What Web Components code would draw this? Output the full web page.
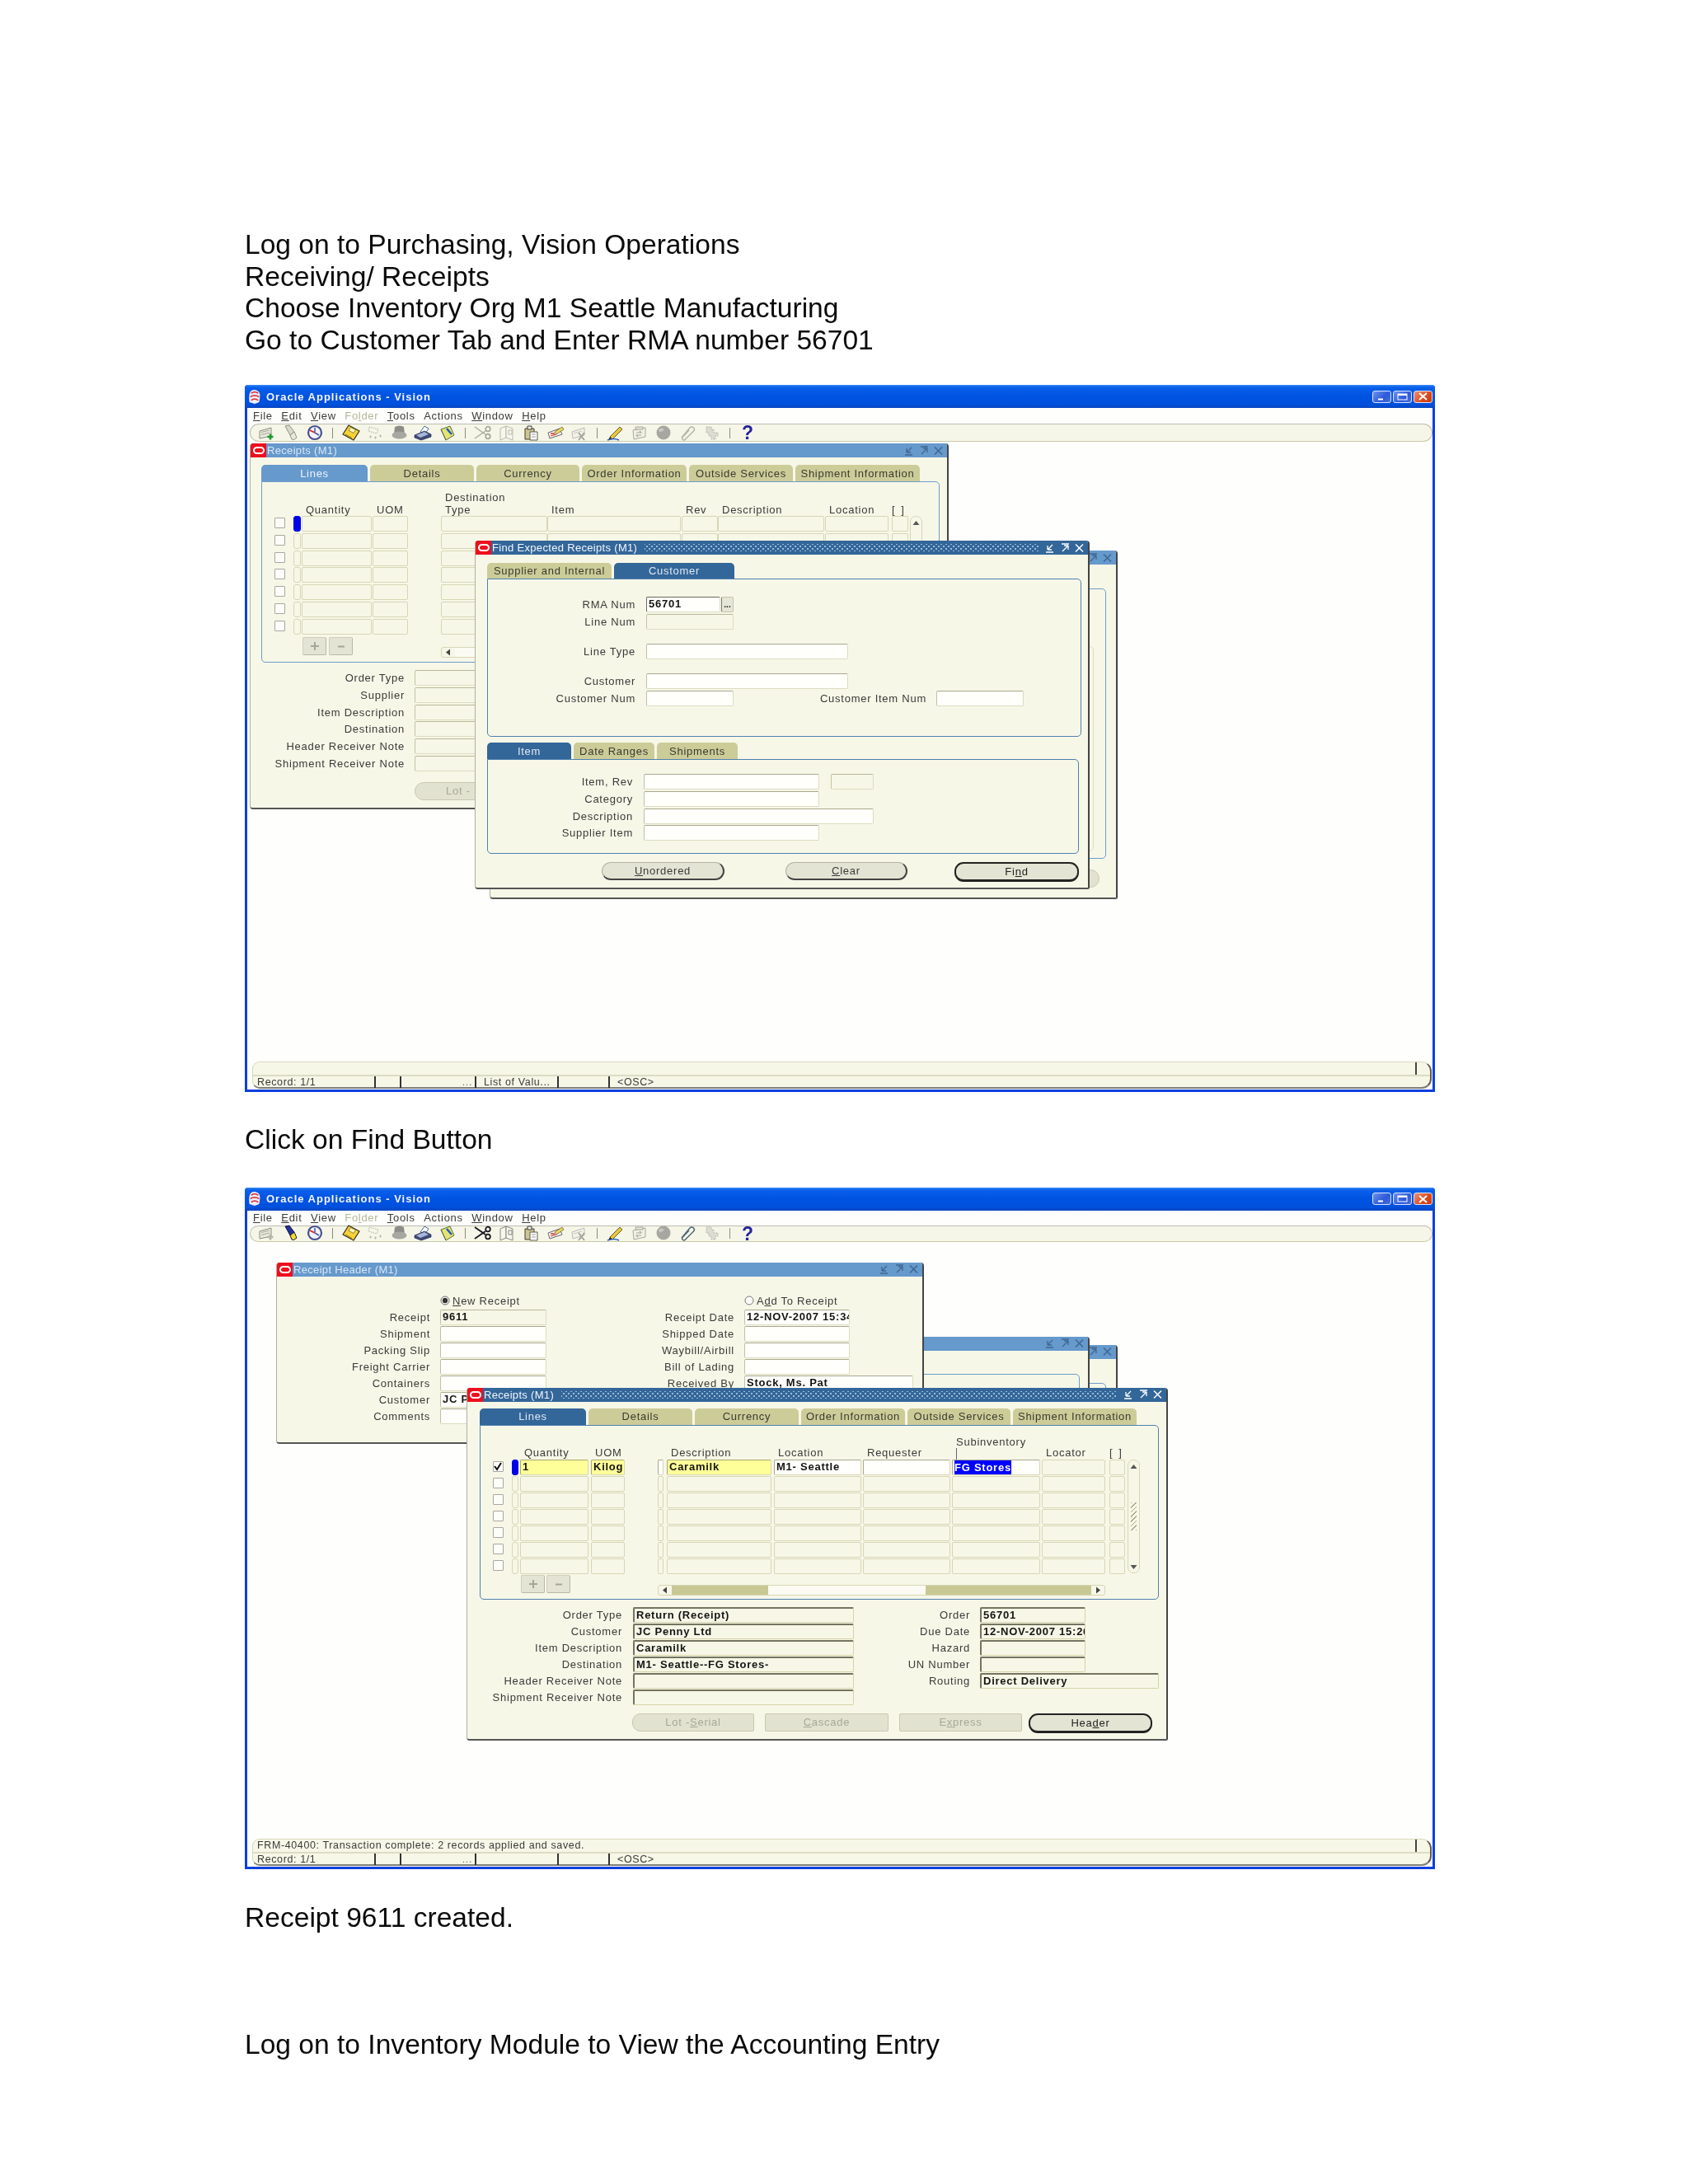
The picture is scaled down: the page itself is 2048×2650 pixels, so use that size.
<!DOCTYPE html>
<html><head><meta charset="utf-8"><title>Receipts</title>
<style>
html,body{margin:0;background:#fff}
main{display:block;box-sizing:border-box;padding:278px 0 0 297px;height:2650px;overflow:hidden}
</style></head><body>
<main>
<doc-text>Log on to Purchasing, Vision Operations</doc-text>
<doc-text>Receiving/ Receipts</doc-text>
<doc-text>Choose Inventory Org M1 Seattle Manufacturing</doc-text>
<doc-text>Go to Customer Tab and Enter RMA number 56701</doc-text>

<ora-app style="margin-top:35px;height:858px;--mh:19px;--th:22px" set="1" lov="List of Valu...">
  <ora-win title="Receipts (M1)" style="left:3px;top:2px;width:848px;height:444px">
    <ora-tabs tabs="Lines|Details|Currency|Order Information|Outside Services|Shipment Information" widths="132 129 128 130 129 154" style="margin:9px 0 0 13px;width:823px" ph="220">
      <ora-table cols='[[23,0,"chk"],[10,9,"ind"],[86,85,"f","Quantity"],[83,43,"f","UOM"],[129,129,"f","Destination|Type"],[163,162,"f","Item"],[44,44,"f","Rev"],[130,129,"f","Description"],[81,77,"f","Location"],[22,20,"f","[ ]"],[15,15,"vs"]]' pitch="20.7" first='{}' hs='{"w":546,"gap":107,"btngap":3,"mt":2,"parts":[]}'></ora-table>
    </ora-tabs>
    <ora-form cols="187px 12px 269px" rows="repeat(6,20.7px)" style="margin-top:9px">
      <ora-label r="1" c="1/2">Order Type</ora-label><ora-field r="1" c="3/4"></ora-field>
      <ora-label r="2" c="1/2">Supplier</ora-label><ora-field r="2" c="3/4"></ora-field>
      <ora-label r="3" c="1/2">Item Description</ora-label><ora-field r="3" c="3/4"></ora-field>
      <ora-label r="4" c="1/2">Destination</ora-label><ora-field r="4" c="3/4"></ora-field>
      <ora-label r="5" c="1/2">Header Receiver Note</ora-label><ora-field r="5" c="3/4"></ora-field>
      <ora-label r="6" c="1/2">Shipment Receiver Note</ora-label><ora-field r="6" c="3/4"></ora-field>
    </ora-form>
    <ora-row style="margin:11px 0 0 199px"><ora-btn w="148" kind="dis">Lot - Serial</ora-btn></ora-row>
  </ora-win>

  <ora-win title="Receipts (M1)" style="left:294px;top:132px;width:762px;height:423px">
    <ora-panel style="margin:29px 0 0 16px;width:731px;height:328px;display:flex">
      <ora-panel soft style="margin:69px 14px 0 auto;width:680px;height:249px"></ora-panel>
    </ora-panel>
    <ora-row style="margin:13px 20px 0 auto"><ora-btn w="148" kind="dis"></ora-btn></ora-row>
  </ora-win>

  <ora-win title="Find Expected Receipts (M1)" active style="left:276px;top:120px;width:746px;height:423px">
    <ora-tabs dark tabs="Supplier and Internal|Customer" active="1" widths="154 149" th="19" ph="192" style="margin:10px 0 0 14px;width:721px">
      <ora-form cols="179px 13px 90px 16px 139px 95px 12px 106px" rows="21px 36px 36px 21px 21px" style="padding-top:21px">
        <ora-label r="1" c="1/2">RMA Num</ora-label><ora-field r="1" c="3/4" k="k">56701</ora-field><ora-lov r="1" c="4/5"></ora-lov>
        <ora-label r="2" c="1/2">Line Num</ora-label><ora-field r="2" c="3/5" k="b"></ora-field>
        <ora-label r="3" c="1/2">Line Type</ora-label><ora-field r="3" c="3/6" k="w"></ora-field>
        <ora-label r="4" c="1/2">Customer</ora-label><ora-field r="4" c="3/6" k="w"></ora-field>
        <ora-label r="5" c="1/2">Customer Num</ora-label><ora-field r="5" c="3/5" k="w"></ora-field>
        <ora-label r="5" c="5/7">Customer Item Num</ora-label><ora-field r="5" c="8/9" k="w"></ora-field>
      </ora-form>
    </ora-tabs>
    <ora-tabs dark tabs="Item|Date Ranges|Shipments" widths="105 101 101" ph="115" style="margin:7px 0 0 14px;width:718px">
      <ora-form cols="176px 13px 213px 14px 52px" rows="21px 21px 20px 20px" style="padding-top:17px">
        <ora-label r="1" c="1/2">Item, Rev</ora-label><ora-field r="1" c="3/4" k="w"></ora-field><ora-field r="1" c="5/6" k="b"></ora-field>
        <ora-label r="2" c="1/2">Category</ora-label><ora-field r="2" c="3/4" k="w"></ora-field>
        <ora-label r="3" c="1/2">Description</ora-label><ora-field r="3" c="3/6" k="w"></ora-field>
        <ora-label r="4" c="1/2">Supplier Item</ora-label><ora-field r="4" c="3/4" k="w"></ora-field>
      </ora-form>
    </ora-tabs>
    <ora-row style="margin:10px 0 0 153px;gap:74px">
      <ora-btn w="149"><u>U</u>nordered</ora-btn><ora-btn w="148"><u>C</u>lear</ora-btn><ora-btn w="151" kind="def" style="margin-left:-17px">Fi<u>n</u>d</ora-btn>
    </ora-row>
  </ora-win>
</ora-app>

<doc-text style="margin-top:39px">Click on Find Button</doc-text>

<ora-app style="margin-top:38px;height:827px;--mh:18px;--th:20px" set="2" message="FRM-40400: Transaction complete: 2 records applied and saved.">
  <ora-win title="Receipts (M1)" style="left:294px;top:125px;width:762px;height:423px">
    <ora-panel style="margin:29px 0 0 16px;width:731px;height:328px"></ora-panel>
  </ora-win>
  <ora-win title="Find Expected Receipts (M1)" style="left:277px;top:115px;width:745px;height:423px">
    <ora-panel style="margin:28px 0 0 14px;width:718px;height:190px"></ora-panel>
  </ora-win>

  <ora-win title="Receipt Header (M1)" style="left:35px;top:25px;width:786px;height:220px">
    <ora-form cols="186px 12px 129px 228px 12px 128px 77px" rows="repeat(8,20px)" style="margin-top:20px">
      <ora-radio r="1" c="3/5" on><u>N</u>ew Receipt</ora-radio><ora-radio r="1" c="6/8">A<u>d</u>d To Receipt</ora-radio>
      <ora-label r="2" c="1/2">Receipt</ora-label><ora-field r="2" c="3/4" k="b">9611</ora-field>
      <ora-label r="2" c="4/5">Receipt Date</ora-label><ora-field r="2" c="6/7" k="w">12-NOV-2007 15:34</ora-field>
      <ora-label r="3" c="1/2">Shipment</ora-label><ora-field r="3" c="3/4" k="w"></ora-field>
      <ora-label r="3" c="4/5">Shipped Date</ora-label><ora-field r="3" c="6/7" k="w"></ora-field>
      <ora-label r="4" c="1/2">Packing Slip</ora-label><ora-field r="4" c="3/4" k="w"></ora-field>
      <ora-label r="4" c="4/5">Waybill/Airbill</ora-label><ora-field r="4" c="6/7" k="w"></ora-field>
      <ora-label r="5" c="1/2">Freight Carrier</ora-label><ora-field r="5" c="3/4" k="w"></ora-field>
      <ora-label r="5" c="4/5">Bill of Lading</ora-label><ora-field r="5" c="6/7" k="w"></ora-field>
      <ora-label r="6" c="1/2">Containers</ora-label><ora-field r="6" c="3/4" k="w"></ora-field>
      <ora-label r="6" c="4/5">Received By</ora-label><ora-field r="6" c="6/8" k="w">Stock, Ms. Pat</ora-field>
      <ora-label r="7" c="1/2">Customer</ora-label><ora-field r="7" c="3/4" k="w">JC Penny Ltd</ora-field>
      <ora-label r="8" c="1/2">Comments</ora-label><ora-field r="8" c="3/4" k="w"></ora-field>
    </ora-form>
  </ora-win>

  <ora-win title="Receipts (M1)" active style="left:266px;top:177px;width:851px;height:428px">
    <ora-tabs dark tabs="Lines|Details|Currency|Order Information|Outside Services|Shipment Information" widths="132 129 129 129 128 153" style="margin:8px 0 0 15px;width:824px" ph="212">
      <ora-table cols='[[23,0,"chk"],[10,8,"ind"],[86,83,"f","Quantity"],[81,41,"f","UOM"],[11,7,"f"],[130,127,"f","Description"],[108,106,"f","Location"],[108,106,"f","Requester"],[109,107,"f","@Subinventory"],[82,77,"f","Locator"],[22,19,"f","[ ]"],[15,15,"vs"]]' pitch="20" check first='{"2":["1","y"],"3":["Kilog","y"],"4":["","w"],"5":["Caramilk","y"],"6":["M1- Seattle","w"],"7":["","w"],"8":["!FG Stores","w"]}' hs='{"w":543,"gap":106,"btngap":2,"mt":0,"parts":[117,191,201]}'></ora-table>
    </ora-tabs>
    <ora-form cols="173px 13px 268px 141px 12px 128px 89px" rows="repeat(6,20px)" style="margin:9px 0 0 15px">
      <ora-label r="1" c="1/2">Order Type</ora-label><ora-field r="1" c="3/4" k="r">Return (Receipt)</ora-field>
      <ora-label r="2" c="1/2">Customer</ora-label><ora-field r="2" c="3/4" k="r">JC Penny Ltd</ora-field>
      <ora-label r="3" c="1/2">Item Description</ora-label><ora-field r="3" c="3/4" k="r">Caramilk</ora-field>
      <ora-label r="4" c="1/2">Destination</ora-label><ora-field r="4" c="3/4" k="r">M1- Seattle--FG Stores-</ora-field>
      <ora-label r="5" c="1/2">Header Receiver Note</ora-label><ora-field r="5" c="3/4" k="r"></ora-field>
      <ora-label r="6" c="1/2">Shipment Receiver Note</ora-label><ora-field r="6" c="3/4" k="r"></ora-field>
      <ora-label r="1" c="4/5">Order</ora-label><ora-field r="1" c="6/7" k="r">56701</ora-field>
      <ora-label r="2" c="4/5">Due Date</ora-label><ora-field r="2" c="6/7" k="r">12-NOV-2007 15:26</ora-field>
      <ora-label r="3" c="4/5">Hazard</ora-label><ora-field r="3" c="6/7" k="r"></ora-field>
      <ora-label r="4" c="4/5">UN Number</ora-label><ora-field r="4" c="6/7" k="r"></ora-field>
      <ora-label r="5" c="4/5">Routing</ora-label><ora-field r="5" c="6/8" k="r">Direct Delivery</ora-field>
    </ora-form>
    <ora-row style="margin:9px 0 0 200px;gap:13px">
      <ora-btn w="148" kind="dis" radius="10px 2px 2px 10px">Lot - <u>S</u>erial</ora-btn><ora-btn w="150" kind="dis" radius="2px"><u>C</u>ascade</ora-btn><ora-btn w="149" kind="dis" radius="2px">E<u>x</u>press</ora-btn><ora-btn w="150" kind="def" style="margin-left:-5px">Hea<u>d</u>er</ora-btn>
    </ora-row>
  </ora-win>
</ora-app>

<doc-text style="margin-top:40px">Receipt 9611 created.</doc-text>
<doc-text style="margin-top:115px">Log on to Inventory Module to View the Accounting Entry</doc-text>
</main>

<script>
const sh=(el,html)=>{el.attachShadow({mode:'open'}).innerHTML=html;return el.shadowRoot};
const place=el=>{const r=el.getAttribute('r'),c=el.getAttribute('c');if(r)el.style.gridRow=r;if(c)el.style.gridColumn=c};

customElements.define('doc-text',class extends HTMLElement{constructor(){super();sh(this,`<style>:host{display:block;font:33.6px/38.6px "Liberation Sans",Arial,sans-serif;color:#0a0a0a;white-space:nowrap;filter:blur(.35px)}</style><slot></slot>`)}});

/* ---------- toolbar icons ---------- */
const ICON={
 new:v=>`<path d="M2 8 16 4v10L2 17z" fill="#e9e9dc" stroke="#8a8a80"/><path d="M4 9.500 14 7M4 12.500 14 10" stroke="#a5a598"/><path d="M15 11.500v7M11.500 15h7" stroke="${v==1?'#1c9a2e':'#b5b5a8'}" stroke-width="2.600"/>`,
 flash:v=>{const a=v==1?['#d8d8cc','#e9e9dc','#8f8f86']:['#23349a','#f5d82e','#16163a'];return `<path d="M4 2 9 1l6 8-5 4z" fill="${a[0]}" stroke="${a[2]}"/><path d="M10 13l5-4 3 7q-4 4-6 2z" fill="${a[1]}" stroke="${a[2]}"/>`},
 clock:()=>`<circle cx="11" cy="10" r="8" fill="#f2f2fa" stroke="#46508e" stroke-width="2.200"/><path d="M5 7l6 3" stroke="#d22" stroke-width="1.800"/><path d="M11 10l5 3M11 4v5" stroke="#3a5ab0" stroke-width="1.500"/>`,
 save:()=>`<path d="M8 1 21 8 14 19 1 12z" fill="#f4d238" stroke="#3a3420" stroke-width="1.300"/><path d="M10.500 3.500l6 3.200-2.500 3.800-6-3.200z" fill="#fff7b8" stroke="#6b5c20" stroke-width=".7"/><path d="M4 12l8 4.500" stroke="#8c7414"/>`,
 nav:()=>`<path d="M4 3l11 3-2 5-10-3z" fill="none" stroke="#b5b5a8" stroke-dasharray="1.500 1"/><path d="M4 15h3M5.500 13.500v3M10 16h3M11.500 14.500v3M16 14h3M17.500 12.500v3" stroke="#b5b5a8"/>`,
 hat:()=>`<path d="M5 12 6 3q6-3 11 0l1 9z" fill="#8d8d88"/><ellipse cx="11.500" cy="13" rx="9" ry="4.500" fill="#a8a8a2"/>`,
 print:()=>`<path d="M8 9l5-7 5 3-4 6z" fill="#fff" stroke="#4a6aa0"/><path d="M1 13l12-5 8 4v3L9 19l-8-3z" fill="#3f4a78" stroke="#222a50" stroke-width=".7"/><path d="M3 13l10-4 5 3-10 4z" fill="#a8b6d8"/>`,
 folder:()=>`<path d="M3 6l11-4 5 11-10 6z" fill="#e4e278" stroke="#55703a"/><path d="M3 6l6 13" stroke="#55703a"/><path d="M10 5l6 7" stroke="#1c5ab8" stroke-width="2.400"/>`,
 cut:v=>{const c=v==1?'#a9a9a0':'#15151f';return `<path d="M1 3l13 9M1 17l13-9" stroke="${c}" stroke-width="${v==1?1.400:1.800}" fill="none"/><circle cx="17" cy="5.500" r="2.800" fill="none" stroke="${c}" stroke-width="1.800"/><circle cx="17" cy="14.500" r="2.800" fill="none" stroke="${c}" stroke-width="1.800"/>`},
 copy:v=>{const c=v==1?'#b8b8ac':'#888880';return `<path d="M3 5l7-3v14l-7 3z" fill="#f7f7ee" stroke="${c}"/><path d="M10 2l8 3v14l-8-3z" fill="#f7f7ee" stroke="${c}"/><path d="M13 7h4v5h-4z" fill="none" stroke="${c}"/>`},
 paste:()=>`<path d="M3 5h11v13H3z" fill="#cfc493" stroke="#3e3e30"/><path d="M6 2h5v4H6z" fill="#eee" stroke="#3e3e30"/><path d="M9 9h9v10H9z" fill="#fff" stroke="#5a5a4a"/><path d="M11 12h5M11 15h5" stroke="#999"/>`,
 edit:()=>`<path d="M2 10l14-5 3 7-15 5z" fill="#f7f7f2" stroke="#666"/><path d="M5 11h5M5 14l7-2" stroke="#c33" stroke-width="1.300"/><path d="M10 9l9-6 2 3-9 6z" fill="#f0d850" stroke="#555" stroke-width=".7"/>`,
 del:()=>`<path d="M2 9l15-5v9L3 17z" fill="#f2f2e8" stroke="#bbb"/><path d="M4 11l10-3" stroke="#c8c8bc"/><path d="M10 10l7 9M17 10l-7 9" stroke="#a5a59c" stroke-width="2"/>`,
 pencil:()=>`<path d="M4 15 16 3l3 3L7 18z" fill="#e8c838" stroke="#3c3c2c" stroke-width=".8"/><path d="M4 15l3 3-5 1z" fill="#222"/><path d="M1 19q8-3 14 0" fill="none" stroke="#2a5ab8" stroke-width="1.600"/>`,
 form:()=>`<path d="M3 7l15-3v11L4 18z" fill="#f0f0e6" stroke="#a8a89c"/><path d="M6 3h9v3H6z" fill="#e4e4da" stroke="#a8a89c"/><path d="M7 10h6l-2-2M13 13H7l2 2" fill="none" stroke="#a8a89c" stroke-width="1.200"/>`,
 globe:()=>`<circle cx="11" cy="10" r="8.500" fill="#a7a7a2"/><path d="M5 6q4-3 7 0-3 4-6 3z" fill="#c8c8c2"/>`,
 clip:v=>{const c=v==1?'#b4b4a8':'#4f6a78';return `<path d="M5 16 15 4a3 3 0 0 1 4.500 4L9.500 18a2 2 0 0 1-3.500-2.500L14 7" fill="none" stroke="${c}" stroke-width="1.500" transform="translate(-1)"/>`},
 puzzle:()=>`<path d="M4 3h6v3h3v4h5v4h-3v4h-5v-4H7v-4H4z" fill="#dcdcd2" stroke="#b8b8ac" stroke-dasharray="2 1"/>`
};
const ORDER=['new','flash','clock','|','save','nav','hat','print','folder','|','cut','copy','paste','edit','del','|','pencil','form','globe','clip','puzzle','|','?'];

customElements.define('ora-app',class extends HTMLElement{constructor(){super();
 const v=this.getAttribute('set')||'1';
 const tools=ORDER.map(n=>n=='|'?'<i class="sep"></i>':n=='?'?'<span class="ic help">?</span>':`<span class="ic"><svg width="22" height="20" viewBox="0 0 22 20" stroke-linejoin="round">${ICON[n](v)}</svg></span>`).join('');
 const msg=this.getAttribute('message')||'';
 const lov=this.getAttribute('lov')||'';
 const cell=(w,t,cls='')=>`<span class="c ${cls}" style="width:${w}px">${t}</span>`;
 sh(this,`<style>
 :host{display:flex;flex-direction:column;box-sizing:border-box;width:1444px;padding:0 3px 3px;background:#0b3fdf;border-radius:4px 4px 0 0;
  font:13px/19px "Liberation Sans",Arial,sans-serif;letter-spacing:.75px;color:#3a3a3a;filter:blur(.35px)}
 .title{flex:none;margin:0 -3px;height:28px;display:flex;align-items:center;padding:0 3px 0 4px;border-radius:4px 4px 0 0;
  background:linear-gradient(#3a8cf4 0,#0a60ea 10%,#0054e2 45%,#0050dc 85%,#0a46c0 100%);color:#f4f4ff;font-weight:700;font-size:13px;letter-spacing:1px}
 .title svg{flex:none}
 .title svg.app{margin-right:6px}
 .title b{flex:1}
 .xp{width:23px;height:15px;margin-left:2px;border-radius:3px;border:1px solid #d8e4fa;box-sizing:border-box;background:linear-gradient(135deg,#6f92ee,#2c58d8 60%,#4a70e0);display:flex;align-items:center;justify-content:center}
 .xp.x{background:linear-gradient(135deg,#f09070,#dc4a1c 60%,#c83a10);margin-right:0}
 .in{flex:1;min-height:0;display:flex;flex-direction:column;background:#fefefc}
 .menu{flex:none;height:var(--mh);display:flex;gap:10.500px;align-items:center;padding-left:7px;letter-spacing:.7px}
 .menu .off{color:#b5b59a}
 .tb{flex:none;box-sizing:border-box;height:var(--th);margin-left:3px;padding-left:5px;display:flex;align-items:center;background:#f6f6e8;border:1px solid #bdbdb0;border-bottom-color:#c9c9a8;border-radius:11px}
 .ic{flex:none;width:29.3px;display:flex;justify-content:center;align-items:center;height:18px}
 .ic svg{display:block;margin-top:-1px}
 .help{font:700 23px/18px "Liberation Sans",sans-serif;letter-spacing:0;color:#24249c}
 .sep{flex:none;width:1px;height:13px;background:#8a8a80;margin:0 6.500px}
 .desk{flex:1;position:relative;min-height:0}
 .st{flex:none;box-sizing:border-box;height:33px;margin:0 1px 1px 6px;background:#f7f7e8;border:1px solid #d8d8bc;border-bottom:2px solid #7f7f78;border-right:2px solid #5a5a55;border-radius:9px 12px 12px 9px;display:flex;flex-direction:column}
 .l1{height:15px;display:flex;align-items:center;justify-content:space-between;padding:0 16px 0 5px;border-bottom:2px solid #dcdcc4;font-size:12.5px;line-height:15px;letter-spacing:.62px;white-space:nowrap}
 .l1 i{width:2px;height:15px;background:#444}
 .l2{flex:1;display:flex;align-items:center;font-size:12.5px;line-height:14px;letter-spacing:.62px;white-space:nowrap;padding-left:5px}
 .c{box-sizing:border-box;display:block;padding-left:9px;height:14px;border-left:2px solid #333;overflow:hidden}
 .c.f{border-left:0;padding-left:0}
 .c.r{text-align:right;padding-right:3px;color:#777}
 </style>
 <div class="title"><svg class="app" width="16" height="17" viewBox="0 0 14 16"><path d="M7 0q6 1 6 6t-1 8l-5 2-6-2Q0 10 1 5t6-5z" fill="#eef"/><path d="M3 4q4-3 8 0M2 8q5-3 10 0M3 12q4-3 8 0" fill="none" stroke="#d8383c" stroke-width="1.600"/></svg><b>Oracle Applications - Vision</b>
 <span class="xp"><svg width="11" height="9"><path d="M1 7.500h6" stroke="#fff" stroke-width="2"/></svg></span>
 <span class="xp"><svg width="13" height="9"><rect x="1" y="1" width="11" height="7" fill="none" stroke="#fff"/><path d="M1 2h11" stroke="#fff" stroke-width="2"/></svg></span>
 <span class="xp x"><svg width="13" height="10"><path d="M2 1l9 8M11 1l-9 8" stroke="#fff" stroke-width="2"/></svg></span></div>
 <div class="in">
  <div class="menu"><span><u>F</u>ile</span><span><u>E</u>dit</span><span><u>V</u>iew</span><span class="off">Fo<u>l</u>der</span><span><u>T</u>ools</span><span>Actions</span><span><u>W</u>indow</span><span><u>H</u>elp</span></div>
  <div class="tb">${tools}</div>
  <div class="desk"><slot></slot></div>
  <div class="st"><div class="l1"><span>${msg}</span><i></i></div>
   <div class="l2">${cell(142,'Record: 1/1','f')}${cell(31,'')}${cell(91,'...','r')}${cell(100,lov)}${cell(62,'')}${cell(200,'&lt;OSC&gt;')}</div></div>
 </div>`)}});

customElements.define('ora-win',class extends HTMLElement{constructor(){super();
 const a=this.hasAttribute('active'),t=this.getAttribute('title');
 this.removeAttribute('title');this.dataset.title=t;
 const c=a?'#ffffff':'#3f6690';
 sh(this,`<style>
 :host{position:absolute;display:flex;flex-direction:column;box-sizing:border-box;background:#f7f7e8;border-left:1px solid #b0b0a0;border-right:2px solid #444;border-bottom:2px solid #555;border-radius:4px 4px 2px 4px;overflow:hidden}
 .t{flex:none;height:17px;display:flex;align-items:center;gap:0;background:${a?'#336699':'#6699cc'};color:${a?'#f2f6fa':'#d9e6f4'};white-space:nowrap;letter-spacing:.32px}
 .lg{flex:none;width:19px;height:17px;background:#ee0f1e;display:flex;align-items:center;justify-content:center}
 .lg i{box-sizing:border-box;width:14px;height:9px;border:2px solid #fff;border-radius:5px}
 .n{padding-left:1px;margin-right:9px}
 .d{flex:1;height:9px;${a?`background:radial-gradient(circle,#9cbcd8 .8px,transparent 1.1px) 0 0/6px 6px,radial-gradient(circle,#9cbcd8 .8px,transparent 1.1px) 3px 3px/6px 6px`:''}}
 .w{display:flex;gap:6px;padding:0 5px 0 8px;flex:none}
 .b{flex:1;min-height:0;display:flex;flex-direction:column}
 </style>
 <div class="t"><span class="lg"><i></i></span><span class="n">${t}</span><span class="d"></span>
 <span class="w"><svg width="12" height="12"><path d="M1 11h9M3 8l6-6M3 8h5M3 8V3" stroke="${c}" fill="none" stroke-width="1.300"/></svg><svg width="12" height="12"><path d="M2 1h9M3 10l7-7M10 3H5M10 3v5" stroke="${c}" fill="none" stroke-width="1.300"/></svg><svg width="11" height="12"><path d="M1 1.500l9 9M10 1.500l-9 9" stroke="${c}" fill="none" stroke-width="1.500"/></svg></span></div>
 <div class="b"><slot></slot></div>`)}});

customElements.define('ora-tabs',class extends HTMLElement{constructor(){super();
 const names=this.getAttribute('tabs').split('|'),ws=this.getAttribute('widths').split(' '),act=+(this.getAttribute('active')||0),dark=this.hasAttribute('dark');
 const th=this.getAttribute('th')||20,ph=this.getAttribute('ph');
 const col=dark?'#336699':'#6699cc';
 sh(this,`<style>
 :host{display:block;flex:none;box-sizing:border-box}
 .s{display:flex;height:${th}px;align-items:stretch}
 .x{box-sizing:border-box;margin-right:3px;border-radius:5px 5px 0 0;background:#cccc99;display:flex;align-items:center;justify-content:center;white-space:nowrap;color:#3a3a30;letter-spacing:.72px}
 .x.a{background:${col};color:${dark?'#dfe9f3':'#eef4fa'}}
 .p{box-sizing:border-box;height:${ph}px;background:#f7f7e8;border:1px solid ${dark?'#4e80ae':'#6c9ccb'};border-radius:0 5px 5px 5px}
 </style><div class="s">${names.map((n,i)=>`<span class="x ${i==act?'a':''}" style="width:${ws[i]-3}px">${n}</span>`).join('')}</div><div class="p"><slot></slot></div>`)}});

customElements.define('ora-panel',class extends HTMLElement{constructor(){super();
 const soft=this.hasAttribute('soft');
 sh(this,`<style>:host{display:block;box-sizing:border-box;flex:none;border:1px solid ${soft?'#dcdcc0':'#6c9ccb'};border-radius:5px;background:#f7f7e8}</style><slot></slot>`)}});

customElements.define('ora-form',class extends HTMLElement{constructor(){super();
 sh(this,`<style>:host{display:grid;flex:none;box-sizing:border-box;justify-content:start;grid-template-columns:${this.getAttribute('cols')};grid-template-rows:${this.getAttribute('rows')}}</style><slot></slot>`)}});

customElements.define('ora-row',class extends HTMLElement{constructor(){super();
 sh(this,`<style>:host{display:flex;flex:none}</style><slot></slot>`)}});

customElements.define('ora-label',class extends HTMLElement{constructor(){super();
 sh(this,`<style>:host{display:block;text-align:right;white-space:nowrap;height:19px;line-height:20px;color:#3a3a3a}</style><slot></slot>`)}
 connectedCallback(){place(this)}});

const FK={
 b:'background:#f7f7e8;border:1px solid #dcdcc0;border-top-color:#b8b898;border-left-color:#c4c4a4',
 w:'background:#fffffb;border:1px solid #dcdcc0;border-top-color:#a8a890;border-left-color:#c0c0a8',
 k:'background:#fffffb;border:1px solid #dcdcc0;border-top-color:#6a6a60;border-left-color:#6a6a60',
 r:'background:#f7f7e8;border:1px solid #d4d4a8;border-top:2px solid #74745f;border-left:2px solid #74745f;line-height:15px',
 y:'background:#ffff99;border:1px solid #d4d4a8'};
customElements.define('ora-field',class extends HTMLElement{constructor(){super();
 const k=this.getAttribute('k')||'b';
 sh(this,`<style>:host{display:block;box-sizing:border-box;height:19px;${FK[k]};border-radius:2px;overflow:hidden;white-space:nowrap;padding-left:2px;font-weight:700;line-height:16px;color:#141414}</style><slot></slot>`)}
 connectedCallback(){place(this)}});

customElements.define('ora-lov',class extends HTMLElement{constructor(){super();
 sh(this,`<style>:host{display:flex;align-items:center;justify-content:center;box-sizing:border-box;height:19px;margin-left:1px;background:#e6e6d6;border:1px solid #c4c4a8;border-left-color:#7a7a6c;border-radius:2px;font-weight:700;font-size:10px;line-height:10px;letter-spacing:0;color:#222}</style>...`)}
 connectedCallback(){place(this)}});

customElements.define('ora-radio',class extends HTMLElement{constructor(){super();
 const on=this.hasAttribute('on');
 sh(this,`<style>:host{display:flex;align-items:center;gap:3px;height:19px;white-space:nowrap}svg{flex:none}</style><svg width="12" height="12"><circle cx="6" cy="6" r="5" fill="#fffffb" stroke="${on?'#666':'#777'}"/>${on?'<circle cx="6" cy="6" r="3.200" fill="#333"/>':''}</svg><span><slot></slot></span>`)}
 connectedCallback(){place(this)}});

customElements.define('ora-btn',class extends HTMLElement{constructor(){super();
 const k=this.getAttribute('kind')||'n',w=this.getAttribute('w'),rad=this.getAttribute('radius')||'11px';
 const skin={n:'background:#e4e4d4;color:#3a3a3a;border:1px solid #b4b4a0;border-right:2px solid #444;border-bottom:2px solid #444',
  dis:'background:#e2e2d0;color:#a8a898;border:1px solid #c8c8b0',
  def:'background:#e4e4d4;color:#222;border:2px solid #222;border-bottom-width:3px'}[k];
 sh(this,`<style>:host{display:flex;flex:none;align-items:center;justify-content:center;box-sizing:border-box;width:${w}px;height:${k=='def'?24:22}px;border-radius:${rad};white-space:nowrap;${skin}}</style><slot></slot>`)}});

customElements.define('ora-table',class extends HTMLElement{constructor(){super();
 const cols=JSON.parse(this.getAttribute('cols')),p=+this.getAttribute('pitch'),first=JSON.parse(this.getAttribute('first')||'{}'),hs=JSON.parse(this.getAttribute('hs')),check=this.hasAttribute('check');
 const N=7;let h='';
 cols.forEach((c,i)=>{const col=i+1;
  let t=c[3]||'';
  if(t.startsWith('@'))h+=`<div class="h sub" style="grid-column:${col};grid-row:1"><span>${t.slice(1)}</span><i></i></div>`;
  else if(t)h+=`<div class="h ${t=='[ ]'?'nb':''}" style="grid-column:${col};grid-row:1">${t.split('|').map(x=>`<span>${x}</span>`).join('')}</div>`;
  if(c[2]=='vs'){h+=`<div class="vs" style="grid-column:${col};grid-row:2/span ${N}"><svg width="13" height="14"><path d="M6.500 5l4 5h-8z" fill="#555"/></svg>${hs.parts.length?'<em></em>':''}<svg width="13" height="14"><path d="M6.500 10l4-5h-8z" fill="#555"/></svg></div>`;return}
  for(let r=0;r<N;r++){
   const pos=`grid-column:${col};grid-row:${r+2}`;
   if(c[2]=='chk')h+=`<div style="${pos}"><div class="chk">${check&&r==0?'<svg width="12" height="12"><path d="M2 6l3 4 5-8" fill="none" stroke="#111" stroke-width="2"/></svg>':''}</div></div>`;
   else if(c[2]=='ind')h+=`<div style="${pos}"><div class="ind ${r==0?'on':''}" style="width:${c[1]}px"></div></div>`;
   else{const v=r==0?first[i]:null;
    let txt=v?v[0]:'',k=v?v[1]:'b';
    if(txt.startsWith('!'))txt=`<mark>${txt.slice(1)}</mark>`;
    h+=`<div style="${pos}"><div class="f ${k}" style="width:${c[1]}px">${txt}</div></div>`}
  }});
 const parts=hs.parts.length?`<b style="width:${hs.parts[0]}px"></b><span class="th" style="width:${hs.parts[1]}px"></span><b style="width:${hs.parts[2]}px"></b>`:`<span class="th" style="flex:1"></span>`;
 const pl=`<svg width="16" height="16"><path d="M8 3v10M3 8h10" stroke="#a6a698" stroke-width="2"/></svg>`,mn=`<svg width="16" height="16"><path d="M4 8.500h8" stroke="#a6a698" stroke-width="2"/></svg>`;
 sh(this,`<style>
 :host{display:block;padding-left:15px}
 .g{display:grid;justify-content:start;grid-template-columns:${cols.map(c=>c[0]+'px').join(' ')};grid-template-rows:41px repeat(${N},${p}px)}
 .h{display:flex;flex-direction:column;justify-content:flex-end;padding-left:5px;line-height:14.500px;white-space:nowrap;box-sizing:border-box}
 .h.nb{padding-left:0;letter-spacing:2px}
 .sub i{display:block;height:14px;border-left:1px solid #666;margin-left:0;margin-top:-1px}
 .f{box-sizing:border-box;height:${Math.floor(p)-1}px;background:#f7f7e8;border:1px solid #d6d6b4;border-radius:2px;overflow:hidden;white-space:nowrap;font-weight:700;padding-left:2px;line-height:15px;color:#141414}
 .f.w{background:#fffffb;border-top-color:#a8a890;border-left-color:#a8a890}.f.y{background:#ffff99;border-top-color:#a8a870;border-left-color:#a8a870}
 mark{background:#0000ff;color:#fff;display:inline-block;line-height:17px}
 .chk{box-sizing:border-box;width:13px;height:13px;margin-top:2px;border:1px solid #a8a8a0;background:#fcfcf8;border-radius:1px}
 .chk svg{display:block;margin:-1px 0 0 -1px}
 .ind{box-sizing:border-box;height:${Math.floor(p)-1}px;border:1px solid #d6d6b4;border-radius:3px;background:#f7f7e8}
 .ind.on{background:#0000e6;border-color:#0000e6}
 .vs{box-sizing:border-box;height:${N*p-2}px;border:1px solid #d6d6b4;border-radius:7px;display:flex;flex-direction:column;justify-content:space-between;overflow:hidden;background:#f7f7e8}
 .vs svg{display:block;flex:none}
 .vs em{display:block;height:34px;margin:0 3px;background:repeating-linear-gradient(135deg,#a9a98a 0 1px,transparent 1px 4px)}
 .ft{display:flex;align-items:flex-start;margin-left:34px;margin-top:${hs.mt}px}
 .pm{box-sizing:border-box;flex:none;width:29px;height:22px;margin-right:${hs.btngap}px;background:#e4e4d4;border:1px solid #cfcfb8;border-right-color:#b8b8a4;border-bottom-color:#b8b8a4;border-radius:2px;display:flex;align-items:center;justify-content:center}
 .hs{box-sizing:border-box;flex:none;display:flex;width:${hs.w}px;height:13px;margin:12px 0 0 ${hs.gap-hs.btngap}px;border:1px solid #d6d6b4;border-radius:3px;background:#f7f7e8}
 .hs svg{flex:none;display:block}
 .hs b{display:block;background:#c8c894}
 .hs .th{display:block;background:#fbfbf3}
 </style><div class="g">${h}</div>
 <div class="ft"><span class="pm">${pl}</span><span class="pm">${mn}</span><div class="hs"><svg width="16" height="11"><path d="M5 5.500l5-4v8z" fill="#444"/></svg>${parts}${hs.parts.length?'<svg width="16" height="11"><path d="M11 5.500l-5-4v8z" fill="#444"/></svg>':''}</div></div>`)}});
</script>
</body></html>
